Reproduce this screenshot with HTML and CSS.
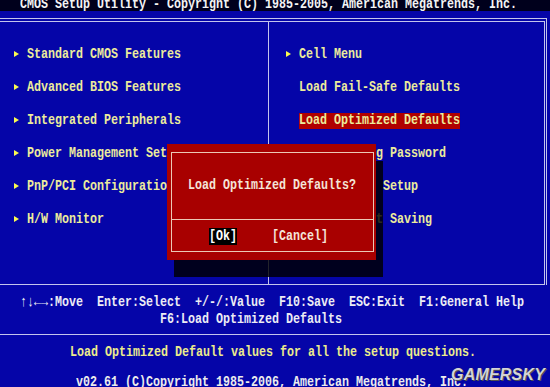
FILE: index.html
```html
<!DOCTYPE html>
<html lang="en">
<head>
    <meta charset="UTF-8">
    <meta name="viewport" content="width=device-width, initial-scale=1.0">
    <title>CMOS Setup Utility</title>
    <link rel="stylesheet" href="styles.css">
</head>
<body>
    <div class="screen">
        <div class="title-bar">
            <span class="txt">CMOS Setup Utility - Copyright (C) 1985-2005, American Megatrends, Inc.</span>
        </div>

        <div class="frame">
            <div class="frame-inner">
                <div class="menu menu-left">
                    <div class="item"><span class="arrow"></span><span class="txt">Standard CMOS Features</span></div>
                    <div class="item"><span class="arrow"></span><span class="txt">Advanced BIOS Features</span></div>
                    <div class="item"><span class="arrow"></span><span class="txt">Integrated Peripherals</span></div>
                    <div class="item"><span class="arrow"></span><span class="txt">Power Management Setup</span></div>
                    <div class="item"><span class="arrow"></span><span class="txt">PnP/PCI Configurations</span></div>
                    <div class="item"><span class="arrow"></span><span class="txt">H/W Monitor</span></div>
                </div>
                <div class="menu menu-right">
                    <div class="item"><span class="arrow"></span><span class="txt">Cell Menu</span></div>
                    <div class="item"><span class="no-arrow"></span><span class="txt">Load Fail-Safe Defaults</span></div>
                    <div class="item selected"><span class="no-arrow"></span><span class="txt">Load Optimized Defaults</span></div>
                    <div class="item"><span class="no-arrow"></span><span class="txt">BIOS Setting Password</span></div>
                    <div class="item"><span class="no-arrow"></span><span class="txt">Save &amp; Exit Setup</span></div>
                    <div class="item"><span class="no-arrow"></span><span class="txt">Exit Without Saving</span></div>
                </div>
            </div>
        </div>

        <div class="keys">
            <div class="key-line"><span class="txt">↑↓←→:Move  Enter:Select  +/-/:Value  F10:Save  ESC:Exit  F1:General Help</span></div>
            <div class="key-line key-line-2"><span class="txt">F6:Load Optimized Defaults</span></div>
        </div>

        <div class="help">
            <div class="help-line"><span class="txt">Load Optimized Default values for all the setup questions.</span></div>
            <div class="copyright"><span class="txt">v02.61 (C)Copyright 1985-2006, American Megatrends, Inc.</span></div>
        </div>

        <!-- confirm box sits over the menu -->
        <div class="dialog">
            <div class="dialog-box">
                <div class="dialog-msg"><span class="txt">Load Optimized Defaults?</span></div>
                <div class="dialog-buttons"><span class="txt"><span class="btn-active">[Ok]</span>     [Cancel]</span></div>
            </div>
        </div>

        <div class="watermark">GAMERSKY</div>
    </div>
</body>
</html>
```

FILE: styles.css
```css
html, body {
    margin: 0;
    padding: 0;
    overflow: hidden;
    background-color: #0505a8;
}

.screen {
    position: relative;
    width: 550px;
    height: 387px;
    overflow: hidden;
    background-color: #0505a8;
    font-family: "Liberation Mono", "DejaVu Sans Mono", monospace;
    font-size: 15px;
    font-weight: bold;
    line-height: 16px;
    color: #e8e8e8;
}

/* 9px mono cells squeezed down to the 7px BIOS cell */
.txt {
    display: inline-block;
    height: 16px;
    white-space: pre;
    transform: scaleX(0.7778);
    transform-origin: 0 0;
}

.title-bar {
    display: flex;
    align-items: flex-start;
    height: 11px;
    padding-left: 20px;
    overflow: hidden;
    background-color: #00001c;
    color: #f4f4f4;
}

.title-bar .txt {
    margin-top: -3px;
}

.frame {
    margin-top: 7px;
    margin-right: 3px;
    border-top: 1px solid #c4c4ec;
    border-right: 1px solid #c4c4ec;
}

.frame-inner {
    display: flex;
    height: 262px;
    margin-top: 2px;
    margin-right: 1px;
    border-top: 1px solid #c4c4ec;
    border-right: 1px solid #c4c4ec;
    border-bottom: 1px solid #c4c4ec;
}

.menu {
    display: flex;
    flex-direction: column;
    gap: 17px;
    padding-top: 25px;
    color: #ecec9c;
}

.menu-left {
    box-sizing: border-box;
    width: 269px;
    padding-left: 13px;
    border-right: 1px solid #c4c4ec;
}

.menu-right {
    padding-left: 16px;
}

.item {
    display: flex;
    height: 16px;
}

.arrow,
.no-arrow {
    flex: none;
    width: 14px;
}

.arrow::before {
    content: "";
    display: block;
    width: 0;
    height: 0;
    margin: 4px 0 0 1px;
    border-left: 5px solid #fafa50;
    border-top: 3.5px solid transparent;
    border-bottom: 3.5px solid transparent;
}

.selected .txt {
    background-color: #b00000;
}

.keys {
    padding: 10px 0 6px 20px;
    border-bottom: 1px solid #c4c4ec;
    color: #ececf4;
}

.key-line {
    height: 17px;
}

.key-line-2 {
    height: 16px;
    padding-left: 140px;
}

.help {
    padding-top: 10px;
}

.help-line {
    height: 16px;
    padding-left: 70px;
    color: #ecec8c;
}

.copyright {
    margin-top: 14px;
    padding-left: 76px;
    color: #ececec;
}

.dialog {
    position: absolute;
    left: 167px;
    top: 144px;
    box-sizing: border-box;
    width: 209px;
    height: 116px;
    padding: 8px 2px 8px 4px;
    background-color: #a80000;
    box-shadow: 7px 17px 0 rgba(0, 0, 0, 0.82);
    color: #f4e4d8;
}

.dialog-box {
    border: 1px solid #ecc8b4;
}

.dialog-msg {
    display: flex;
    justify-content: center;
    height: 41px;
    padding-top: 25px;
    border-bottom: 1px solid #ecc8b4;
}

.dialog-msg .txt {
    transform-origin: 50% 0;
}

.dialog-buttons {
    height: 22px;
    padding: 9px 0 0 37px;
}

.btn-active {
    background-color: #000;
    color: #fff;
}

.watermark {
    position: absolute;
    left: 451px;
    top: 367px;
    font-family: "Liberation Sans", Arial, sans-serif;
    font-size: 16px;
    font-weight: bold;
    font-style: italic;
    letter-spacing: 0.2px;
    line-height: 16px;
    color: #d4d4d8;
    text-shadow: 0 0 1px #333, 1px 1px 0 #555;
}
```
